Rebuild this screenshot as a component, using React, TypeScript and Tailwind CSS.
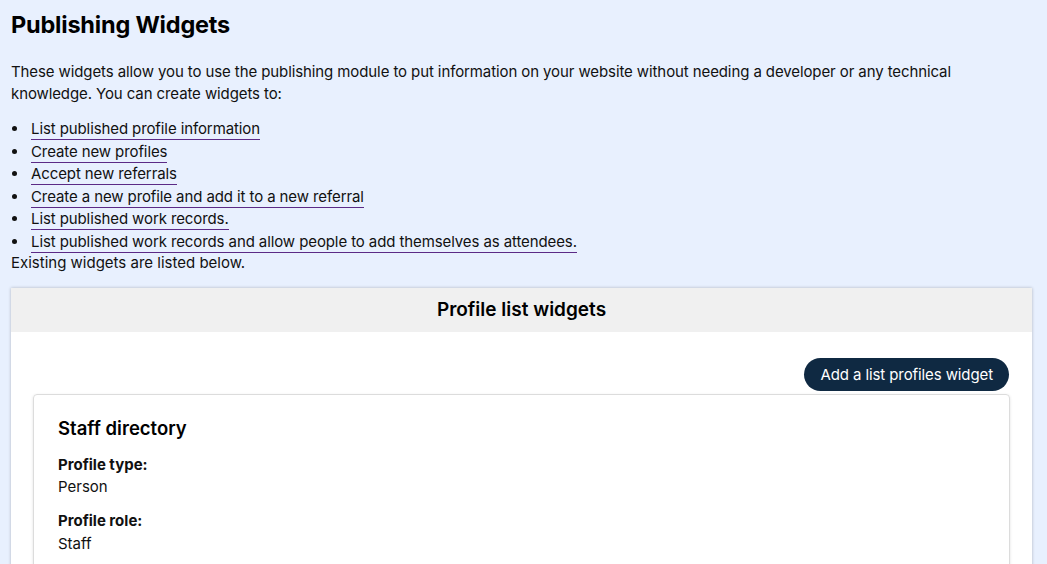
import React from 'react';

const links = [
  'List published profile information',
  'Create new profiles',
  'Accept new referrals',
  'Create a new profile and add it to a new referral',
  'List published work records.',
  'List published work records and allow people to add themselves as attendees.',
];

export default function App() {
  return (
    <div
      className="min-h-[564px] bg-[#e8f0fe] px-[11px] pt-[10px] text-[#111] text-[15px] leading-[22px]"
      style={{ fontFamily: 'Inter, "Noto Sans", sans-serif' }}
    >
      <h1 className="text-[23.5px] leading-[30px] font-bold tracking-[-0.2px] text-black">Publishing Widgets</h1>
      <p className="mt-[21px] pr-[40px] tracking-[-0.1px]">
        These widgets allow you to use the publishing module to put information on your website without needing a developer or any technical
        knowledge. You can create widgets to:
      </p>
      <ul className="mt-[13px] tracking-[-0.1px]">
        {links.map((l) => (
          <li key={l} className="flex h-[22.5px] items-start">
            <span className="flex h-[21px] w-[20px] items-center pl-[1px]">
              <span className="h-[5px] w-[5px] rounded-full bg-[#111]" />
            </span>
            <a href="#" className="border-b border-[#5b2a86] leading-[21px]">
              {l}
            </a>
          </li>
        ))}
      </ul>
      <p className="leading-[20px]">Existing widgets are listed below.</p>

      <section className="mt-[15px] mr-[4px] bg-white shadow-[0_0_3px_rgba(0,0,0,0.25)]">
        <div className="flex h-[44px] items-center justify-center bg-[#f0f0f0]">
          <h2 className="text-[19px] font-semibold text-black">Profile list widgets</h2>
        </div>
        <div className="px-[22px] pt-[26px]">
          <div className="flex justify-end pr-[1px]">
            <button className="h-[33px] rounded-full bg-[#0f2942] px-[16px] text-[15px] tracking-[-0.1px] text-white">
              Add a list profiles widget
            </button>
          </div>
          <div className="mt-[3px] rounded-[4px] border border-[#dcdcdc] px-[24px] pt-[20px] pb-[20px] shadow-[0_1px_3px_rgba(0,0,0,0.12)]">
            <h3 className="text-[18.5px] font-semibold text-black leading-[26px]">Staff directory</h3>
            <dl className="mt-[13px] text-[15px]">
              <dt className="font-bold leading-[22px]">Profile type:</dt>
              <dd className="leading-[22px]">Person</dd>
              <dt className="mt-[12px] font-bold leading-[22px]">Profile role:</dt>
              <dd className="mt-[1px] leading-[22px]">Staff</dd>
            </dl>
          </div>
        </div>
      </section>
    </div>
  );
}
